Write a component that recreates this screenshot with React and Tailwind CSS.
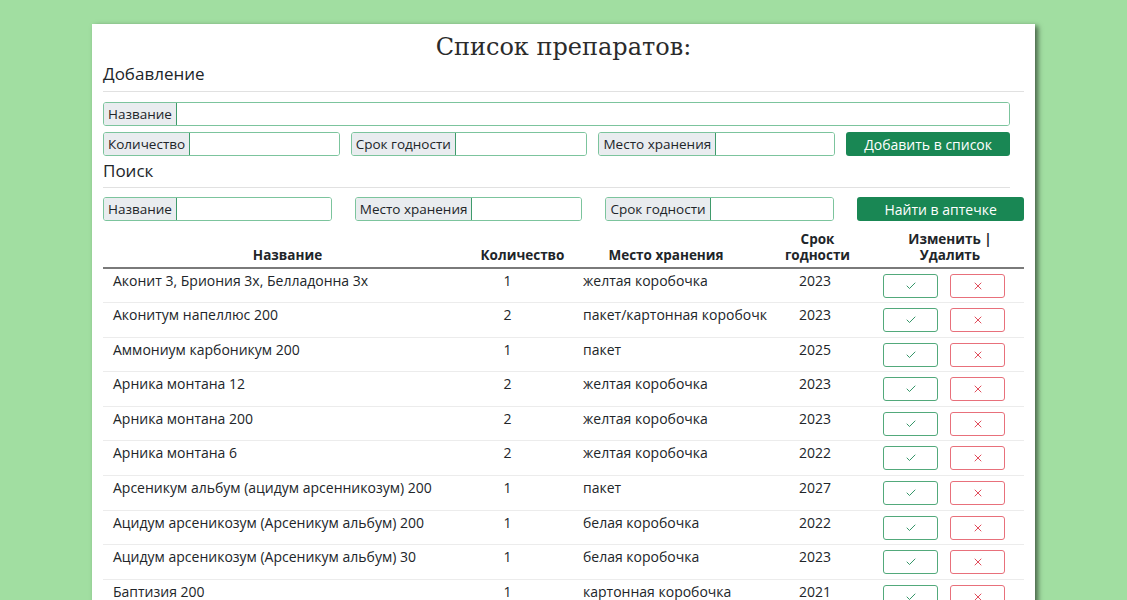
import { Check, X } from 'lucide-react';

const rows = [
  ['Аконит 3, Бриония 3х, Белладонна 3х', '1', 'желтая коробочка', '2023'],
  ['Аконитум напеллюс 200', '2', 'пакет/картонная коробочк', '2023'],
  ['Аммониум карбоникум 200', '1', 'пакет', '2025'],
  ['Арника монтана 12', '2', 'желтая коробочка', '2023'],
  ['Арника монтана 200', '2', 'желтая коробочка', '2023'],
  ['Арника монтана 6', '2', 'желтая коробочка', '2022'],
  ['Арсеникум альбум (ацидум арсенникозум) 200', '1', 'пакет', '2027'],
  ['Ацидум арсеникозум (Арсеникум альбум) 200', '1', 'белая коробочка', '2022'],
  ['Ацидум арсеникозум (Арсеникум альбум) 30', '1', 'белая коробочка', '2023'],
  ['Баптизия 200', '1', 'картонная коробочка', '2021'],
];

function Field({ label, width }) {
  return (
    <div className={`flex h-[24px] rounded-[3px] border border-[#7cc49d] overflow-hidden ${width}`}>
      <span className="flex items-center px-[4px] bg-[#e9ecef] border-r border-[#3f9a6b] text-[13.5px] text-[#212529] whitespace-nowrap">
        {label}
      </span>
      <input className="flex-1 min-w-0 bg-white outline-none" />
    </div>
  );
}

export default function App() {
  return (
    <div
      className="min-h-screen bg-[#a1dea1] flex justify-center pt-[24px]"
      style={{ fontFamily: '"Open Sans", "Noto Sans", sans-serif' }}
    >
      <div className="w-[943px] bg-white px-[11px] shadow-[3px_2px_5px_rgba(0,0,0,0.55)]">
        <h1
          className="text-center text-[24px] leading-[30px] pt-[8px] text-[#2b2b2b]"
          style={{ fontFamily: '"DejaVu Serif", serif' }}
        >
          Список препаратов:
        </h1>

        {/* Добавление */}
        <div className="text-[17px] leading-[20px] mt-[2px] text-[#212529]">Добавление</div>
        <hr className="mt-[7px] border-t border-[#e1e1e1]" />
        <div className="mt-[10px] w-[907px]">
          <Field label="Название" width="w-[907px]" />
          <div className="flex mt-[6px] gap-x-[11px]">
            <Field label="Количество" width="w-[237px]" />
            <Field label="Срок годности" width="w-[237px]" />
            <Field label="Место хранения" width="w-[237px]" />
            <button className="w-[164px] h-[24px] rounded-[3px] bg-[#198754] text-white text-[14px]">
              Добавить в список
            </button>
          </div>
        </div>

        {/* Поиск */}
        <div className="text-[17px] leading-[20px] mt-[5px] text-[#212529]">Поиск</div>
        <hr className="mt-[6px] w-[907px] border-t border-[#e1e1e1]" />
        <div className="flex mt-[9px] gap-x-[23px]">
          <Field label="Название" width="w-[229px]" />
          <Field label="Место хранения" width="w-[228px]" />
          <Field label="Срок годности" width="w-[229px]" />
          <button className="w-[167px] h-[24px] rounded-[3px] bg-[#198754] text-white text-[14px]">
            Найти в аптечке
          </button>
        </div>

        {/* Таблица */}
        <table className="mt-[10px] w-[921px] table-fixed text-[14px] text-[#212529]">
          <colgroup>
            <col className="w-[369px]" />
            <col className="w-[101px]" />
            <col className="w-[186px]" />
            <col className="w-[117px]" />
            <col className="w-[148px]" />
          </colgroup>
          <thead>
            <tr className="border-b-[2px] border-[#7a7a7a] font-bold text-[13.5px] leading-[16px] align-bottom">
              <th className="pb-[4px] text-center">Название</th>
              <th className="pb-[4px] text-center">Количество</th>
              <th className="pb-[4px] text-center">Место хранения</th>
              <th className="pb-[4px] text-center px-[20px]">Срок годности</th>
              <th className="pb-[4px] text-center px-[16px]">Изменить | Удалить</th>
            </tr>
          </thead>
          <tbody>
            {rows.map((r, i) => (
              <tr key={i} className="border-b border-[#ececec] h-[34.6px] align-top">
                <td className="pl-[10px] pt-[1px] whitespace-nowrap overflow-hidden">{r[0]}</td>
                <td className="pt-[1px] text-center pr-[30px]">{r[1]}</td>
                <td className="pl-[10px] pt-[1px] whitespace-nowrap">{r[2]}</td>
                <td className="pt-[1px] text-center pr-[5px]">{r[3]}</td>
                <td className="pt-[5px]">
                  <div className="flex gap-x-[12px] pl-[7px]">
                    <button className="w-[55px] h-[24px] rounded-[3px] border border-[#52a97b] flex items-center justify-center">
                      <Check className="w-[12px] h-[12px] text-[#198754]" strokeWidth={1.75} />
                    </button>
                    <button className="w-[55px] h-[24px] rounded-[3px] border border-[#e8707b] flex items-center justify-center">
                      <X className="w-[12px] h-[12px] text-[#dc3545]" strokeWidth={1.75} />
                    </button>
                  </div>
                </td>
              </tr>
            ))}
          </tbody>
        </table>
      </div>
    </div>
  );
}
